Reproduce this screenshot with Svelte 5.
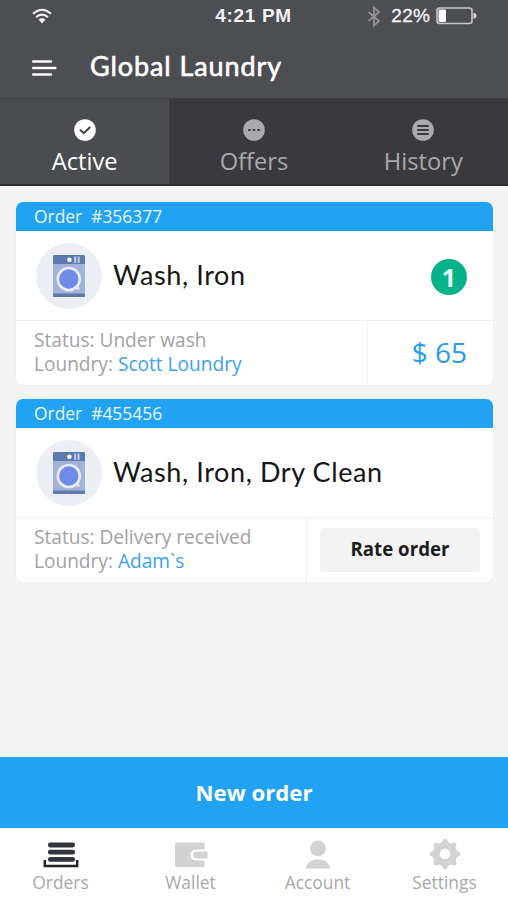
<script>
  const tabs = [
    { id: "active", label: "Active" },
    { id: "offers", label: "Offers" },
    { id: "history", label: "History" },
  ];

  const orders = [
    {
      id: "356377",
      title: "Wash, Iron",
      status: "Under wash",
      laundry: "Scott Loundry",
      count: 1,
      price: "$ 65",
    },
    {
      id: "455456",
      title: "Wash, Iron, Dry Clean",
      status: "Delivery received",
      laundry: "Adam`s",
    },
  ];

  const links = ["Orders", "Wallet", "Account", "Settings"];

  let activeTab = $state("active");
  let activeLink = $state("Orders");
</script>

<div class="app">
  <header>
    <div class="status-bar">
      <svg class="wifi" width="20" height="16" viewBox="0 0 20 16">
        <g fill="none" stroke="currentColor" stroke-width="2.1">
          <path d="M1 5.7Q10 -2.2 19 5.7" />
          <path d="M4.1 9.1Q10 4 15.9 9.1" />
        </g>
        <path d="M6.5 11.6Q10 8.8 13.5 11.6L10 15.5Z" fill="currentColor" />
      </svg>
      <span class="time">4:21 PM</span>
      <div class="power">
        <svg class="bluetooth" width="14" height="21" viewBox="0 0 14 21">
          <path d="M1.5 6L12 15L7 19.5V1.5L12 6L1.5 15" fill="none" stroke="currentColor" stroke-width="1.9" />
        </svg>
        <span class="percent">22%</span>
        <svg width="41" height="18" viewBox="0 0 41 18">
          <rect x="1" y="1" width="35" height="15.5" rx="2.5" fill="none" stroke="#c9c9cb" stroke-width="1.6" />
          <rect x="2.5" y="2.5" width="7.5" height="12.5" rx="1" fill="#fff" />
          <path d="M37.5 5.8Q40.5 6.5 40.5 8.8T37.5 11.8Z" fill="#d8d8da" />
        </svg>
      </div>
    </div>
    <div class="title-bar">
      <button class="menu" aria-label="Menu">
        <svg width="25" height="18" viewBox="0 0 25 18">
          <path d="M1.2 2.5H19M1.2 9H23.4M1.2 15.5H19" stroke="#fff" stroke-width="2.4" stroke-linecap="round" />
        </svg>
      </button>
      <h1>Global Laundry</h1>
    </div>
  </header>

  <div class="tabs">
    {#each tabs as tab}
      <button class="tab" class:selected={activeTab === tab.id} onclick={() => (activeTab = tab.id)}>
        <svg width="22" height="22" viewBox="0 0 22 22">
          <circle cx="11" cy="11" r="10.8" fill="currentColor" />
          {#if tab.id === "active"}
            <path d="M6 10.7L9.8 14.2L16.2 8" fill="none" stroke="#3d3d42" stroke-width="2" />
          {:else if tab.id === "offers"}
            <path d="M5.2 11H7.6M9.8 11H12.2M14.4 11H16.8" stroke="#39393e" stroke-width="2" />
          {:else}
            <path d="M6 7H16M6 11H16M6 15H16" stroke="#39393e" stroke-width="1.8" stroke-linecap="round" />
          {/if}
        </svg>
        <span>{tab.label}</span>
      </button>
    {/each}
  </div>

  <main>
    {#each orders as order}
      <article class="card">
        <div class="card-head">Order&nbsp; #{order.id}</div>
        <div class="card-body">
          <div class="avatar">
            <svg width="32" height="42" viewBox="0 0 32 42">
              <rect width="32" height="42" rx="1.5" fill="#a3b2d8" />
              <path d="M1.5 0H30.5Q32 0 32 1.5V9H0V1.5Q0 0 1.5 0Z" fill="#5c79b0" />
              <path d="M0 38.5H32V41Q32 42 31 42H1Q0 42 0 41Z" fill="#6078ac" />
              <circle cx="16.4" cy="4.8" r="2.3" fill="#fff" />
              <path d="M22.2 1.5V8M25.6 1.5V8" stroke="#c0cde8" stroke-width="2" />
              <path d="M24 29L27 34.5L20 34Z" fill="#e7ecf8" />
              <circle cx="15.8" cy="24" r="11" fill="#708be5" stroke="#e7ecf8" stroke-width="2.6" />
            </svg>
          </div>
          <h2>{order.title}</h2>
          {#if order.count}
            <span class="badge">{order.count}</span>
          {/if}
        </div>
        <div class="card-foot">
          <div class="details">
            <p>Status: {order.status}</p>
            <p>Loundry: <a href="#laundry">{order.laundry}</a></p>
          </div>
          {#if order.price}
            <div class="price">{order.price}</div>
          {:else}
            <div class="rate">
              <button>Rate order</button>
            </div>
          {/if}
        </div>
      </article>
    {/each}
  </main>

  <button class="new-order">New order</button>

  <nav>
    {#each links as link}
      <button class="link" class:current={activeLink === link} onclick={() => (activeLink = link)}>
        <svg width="36" height="32" viewBox="0 0 36 32">
          {#if link === "Orders"}
            <path d="M7.3 7H29.7M7.3 14.2H29.7M7.3 21.4H29.7" stroke="currentColor" stroke-width="4.8" stroke-linecap="round" />
            <path d="M1.8 22V28H34.2V22" fill="none" stroke="#202127" stroke-width="2.4" />
          {:else if link === "Wallet"}
            <path d="M2 6Q2 4.5 3.5 4.5H31.5V11.5H24Q17.5 11.5 17.5 17T24 22.5H31.5V29H3.5Q2 29 2 27.5Z" fill="currentColor" />
            <path d="M34.5 13.5H24Q20 13.5 20 17T24 20.5H34.5Z" fill="currentColor" />
          {:else if link === "Account"}
            <circle cx="18" cy="10.4" r="7.9" fill="currentColor" />
            <path d="M5.3 30.5Q8 21.2 18 21.2T30.7 30.5Z" fill="currentColor" />
          {:else}
            <circle cx="18" cy="16" r="8.7" fill="none" stroke="currentColor" stroke-width="6.8" />
            {#each [0, 45, 90, 135, 180, 225, 270, 315] as angle}
              <path d="M14.3 5.5L16.2 1.2Q18 0.2 19.8 1.2L21.7 5.5Z" fill="currentColor" transform="rotate({angle} 18 16)" />
            {/each}
          {/if}
        </svg>
        <span>{link}</span>
      </button>
    {/each}
  </nav>
</div>

<style>
  :global(body) {
    margin: 0;
  }
  .app {
    display: flex;
    flex-direction: column;
    width: 508px;
    height: 900px;
    overflow: hidden;
    background: #f4f4f4;
    font-family: "Open Sans", sans-serif;
  }
  button {
    padding: 0;
    border: 0;
    background: none;
    font: inherit;
    cursor: pointer;
  }
  svg {
    display: block;
    flex: none;
  }
  h1,
  h2,
  p {
    margin: 0;
  }
  header {
    height: 98px;
    background: #4d4e52;
    color: #fff;
  }
  .status-bar {
    display: grid;
    grid-template-columns: 1fr auto 1fr;
    align-items: center;
    height: 32px;
    padding: 0 31px 0 32px;
    font-family: "Liberation Sans", Arial, sans-serif;
    font-size: 19px;
    color: #f2f2f4;
  }
  .time {
    margin-left: -2px;
    font-weight: 700;
    letter-spacing: 0.7px;
  }
  .power {
    display: flex;
    align-items: center;
    justify-content: flex-end;
  }
  .bluetooth {
    margin-right: 10px;
    color: #929296;
  }
  .percent {
    margin-right: 6px;
    letter-spacing: 0.2px;
    -webkit-text-stroke: 0.3px currentColor;
  }
  .title-bar {
    display: flex;
    align-items: center;
    height: 66px;
    padding-left: 32px;
  }
  .menu {
    margin: 5px 33px 0 0;
  }
  h1 {
    padding-top: 1px;
    font-family: Lato, sans-serif;
    font-size: 27px;
    font-weight: 400;
    line-height: 66px;
    letter-spacing: 0.9px;
    -webkit-text-stroke: 0.6px currentColor;
  }
  .tabs {
    display: flex;
    box-sizing: border-box;
    height: 88px;
    border-top: 1px solid #3f3f44;
    border-bottom: 2px solid #2b2b30;
    background: #39393e;
  }
  .tab {
    display: flex;
    flex: 1;
    flex-direction: column;
    align-items: center;
    padding-top: 20px;
    color: #aaaaad;
    font-size: 23.7px;
  }
  .tab.selected {
    background: #4b4c50;
    color: #fff;
  }
  .tab span {
    margin-top: 5px;
    line-height: 30px;
  }
  main {
    flex: 1;
    padding: 16px 15px 0 16px;
  }
  .card {
    height: 183px;
    margin-bottom: 14px;
    overflow: hidden;
    border-radius: 7px;
    background: #fff;
    box-shadow: 0 0 2px #e6e6e6;
  }
  .card-head {
    height: 29px;
    padding-left: 18px;
    background: #21a2f3;
    color: #e9f6ff;
    font-size: 17.4px;
    font-weight: 500;
    line-height: 29px;
  }
  .card-body {
    display: flex;
    align-items: center;
    box-sizing: border-box;
    height: 90px;
    padding: 0 26px 0 20px;
    border-bottom: 1px solid #f1f1f1;
  }
  .avatar {
    display: flex;
    align-items: center;
    justify-content: center;
    width: 66px;
    height: 66px;
    margin-top: 1px;
    border-radius: 50%;
    background: #ebeef5;
  }
  h2 {
    flex: 1;
    margin: -2px 0 0 11px;
    color: #161616;
    font-family: Lato, sans-serif;
    font-size: 27px;
    font-weight: 400;
    letter-spacing: 0.6px;
  }
  .badge {
    width: 36px;
    height: 36px;
    margin-top: 3px;
    border-radius: 50%;
    background: #05b38a;
    color: #e8fff8;
    font-size: 25px;
    font-weight: 700;
    line-height: 36px;
    text-align: center;
  }
  .card-foot {
    display: flex;
    height: 64px;
  }
  .details {
    flex: 1;
    padding: 7px 0 0 18px;
    color: #a2a2a2;
    font-size: 19.1px;
    line-height: 24px;
    white-space: nowrap;
  }
  .details a {
    color: #3ba2ee;
    text-decoration: none;
  }
  .price,
  .rate {
    box-sizing: border-box;
    border-left: 1px solid #f1f1f1;
  }
  .price {
    width: 126px;
    padding-right: 26px;
    color: #259cf0;
    font-size: 28px;
    line-height: 62px;
    text-align: right;
  }
  .rate {
    width: 187px;
    padding: 10px 13px;
  }
  .rate button {
    width: 160px;
    height: 44px;
    padding-bottom: 3px;
    border-radius: 4px;
    background: #f3f3f3;
    color: #1c1c1e;
    font-size: 18.7px;
    font-weight: 700;
    line-height: 41px;
  }
  .new-order {
    height: 71px;
    flex: none;
    background: #21a2f3;
    color: #fff;
    font-size: 22.2px;
    font-weight: 700;
  }
  nav {
    display: flex;
    box-sizing: border-box;
    height: 72px;
    padding-top: 10px;
    background: #fff;
  }
  .link {
    display: flex;
    flex-direction: column;
    align-items: center;
    box-sizing: border-box;
    width: 127px;
    color: #d2d2d2;
    font-size: 17.4px;
  }
  .link:first-child {
    padding-right: 6px;
  }
  .link.current {
    color: #33353d;
  }
  .link span {
    color: #a8a8a8;
    line-height: 24px;
  }
</style>
